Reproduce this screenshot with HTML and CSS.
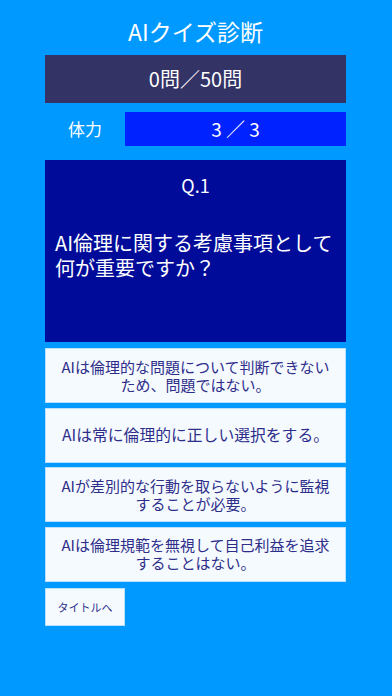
FILE: index.html
```html
<!DOCTYPE html>
<html lang="ja">
<head>
<meta charset="utf-8">
<link rel="stylesheet" href="styles.css">
</head>
<body>
<div class="app">
  <h1 class="title">AIクイズ診断</h1>
  <div class="progress">0問／50問</div>
  <div class="hp-row">
    <div class="hp-label">体力</div>
    <div class="hp-value">3 ／ 3</div>
  </div>
  <div class="question">
    <div class="qnum">Q.1</div>
    <div class="qtext">AI倫理に関する考慮事項として何が重要ですか？</div>
  </div>
  <div class="answers">
    <button class="answer">AIは倫理的な問題について判断できないため、問題ではない。</button>
    <button class="answer answer-large">AIは常に倫理的に正しい選択をする。</button>
    <button class="answer">AIが差別的な行動を取らないように監視することが必要。</button>
    <button class="answer">AIは倫理規範を無視して自己利益を追求することはない。</button>
  </div>
  <button class="back">タイトルへ</button>
</div>
</body>
</html>
```

FILE: styles.css
```css
html, body {
  margin: 0;
  padding: 0;
  background: #0099ff;
  height: 100%;
}
body {
  font-family: "Noto Sans CJK JP", "Noto Sans", sans-serif;
  color: #ffffff;
}
.app {
  padding: 0 46px 0 45px;
  display: flex;
  flex-direction: column;
}
.title {
  margin: 0;
  padding-top: 16px;
  height: 39px;
  line-height: 30px;
  font-size: 23px;
  font-weight: 400;
  text-align: center;
}
.progress {
  height: 48px;
  line-height: 48px;
  background: #333366;
  text-align: center;
  font-size: 20px;
}
.hp-row {
  margin-top: 9px;
  display: flex;
  height: 34px;
}
.hp-label {
  width: 80px;
  line-height: 34px;
  text-align: center;
  font-size: 17px;
}
.hp-value {
  flex: 1;
  background: #0022ff;
  line-height: 34px;
  text-align: center;
  font-size: 19px;
}
.question {
  margin-top: 14px;
  height: 182px;
  background: #000b99;
  box-sizing: border-box;
  padding: 14px 6px 0 10px;
}
.qnum {
  text-align: center;
  font-size: 18px;
  line-height: 22px;
  padding-right: 4px;
}
.qtext {
  margin-top: 34px;
  font-size: 20px;
  line-height: 25px;
}
.answers {
  margin-top: 6px;
  display: flex;
  flex-direction: column;
  gap: 4.5px;
}
.answer {
  height: 55px;
  margin: 0;
  border: 1px solid #b8e0ff;
  background: #f5faff;
  color: #2e2e8a;
  font-family: inherit;
  font-size: 15px;
  line-height: 18px;
  padding: 0 12px;
  text-align: center;
}
.answer-large {
  font-size: 15.8px;
}
.back {
  margin-top: 6.5px;
  width: 80px;
  height: 38px;
  border: 1px solid #b8e0ff;
  background: #f5faff;
  color: #2e2e8a;
  font-family: inherit;
  font-size: 11px;
  padding: 0;
}
```
